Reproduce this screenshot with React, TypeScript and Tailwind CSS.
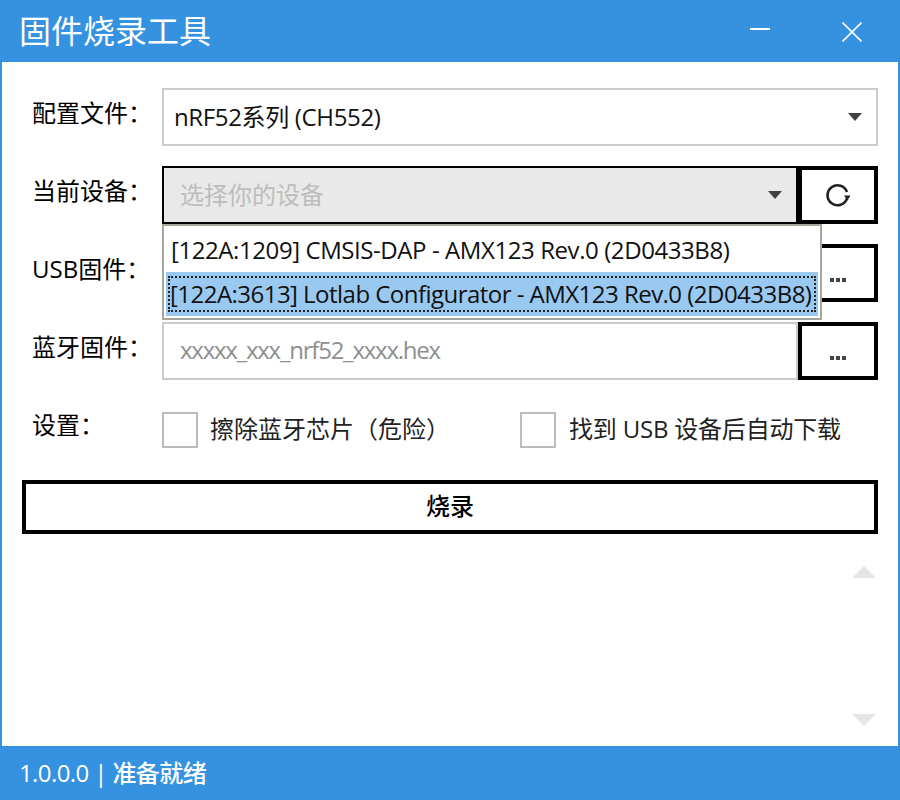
const FONT = "font-['Open_Sans','Noto_Sans_CJK_SC',sans-serif]";

function Caret() {
  return (
    <svg width="14" height="8" viewBox="0 0 14 8" className="shrink-0">
      <polygon points="0,0 14,0 7,8" fill="#404040" />
    </svg>
  );
}

function Label({ children, offset }: { children: React.ReactNode; offset: string }) {
  return <div className={`w-[140px] shrink-0 pl-[10px] text-[24px] leading-[32px] text-black ${offset}`}>{children}</div>;
}

function BlackButton({ children }: { children: React.ReactNode }) {
  return (
    <div className="flex h-[58px] w-[80px] shrink-0 items-center justify-center border-[4px] border-black bg-white text-[24px] font-semibold text-black">
      {children}
    </div>
  );
}

const Dots = () => (
  <svg width="16" height="4" viewBox="0 0 16 4" className="mt-[14px]">
    <rect x="0" y="0" width="4" height="4" fill="#444" />
    <rect x="6" y="0" width="4" height="4" fill="#444" />
    <rect x="12" y="0" width="4" height="4" fill="#444" />
  </svg>
);

export default function App() {
  return (
    <div className={`flex h-[800px] w-[900px] flex-col bg-[#3492e0] ${FONT}`}>
      <div className="flex h-[62px] shrink-0 items-center justify-between pl-[19px] pr-[38px] text-white">
        <div className="text-[32px] leading-[42px]">固件烧录工具</div>
        <div className="flex items-center gap-[72px]">
          <svg width="20" height="20" viewBox="0 0 20 20">
            <rect x="0" y="7" width="20" height="2" fill="#fff" />
          </svg>
          <svg width="20" height="20" viewBox="0 0 20 20" className="mt-[2px]">
            <path d="M0.5 0.5 L19.5 19.5 M19.5 0.5 L0.5 19.5" stroke="#fff" strokeWidth="1.6" fill="none" />
          </svg>
        </div>
      </div>

      <div className="mx-[2px] flex min-h-0 flex-1 flex-col bg-white px-[20px] pt-[26px]">
        <div className="flex items-center">
          <Label offset="pb-[8px]">配置文件：</Label>
          <div className="flex h-[58px] flex-1 items-center justify-between border-2 border-[#cccccc] bg-white pl-[10px] pr-[14px]">
            <span className="text-[24px] tracking-[-0.35px] text-[#111]">nRF52系列 (CH552)</span>
            <Caret />
          </div>
        </div>

        <div className="relative mt-[20px] flex items-center">
          <Label offset="pb-[8px]">当前设备：</Label>
          <div className="flex h-[58px] flex-1 items-center justify-between border-2 border-black bg-[#e9e9e9] pl-[16px] pr-[14px]">
            <span className="text-[24px] text-[#bdbdbd]">选择你的设备</span>
            <Caret />
          </div>
          <BlackButton>
            <svg width="24" height="24" viewBox="0 0 24 24">
              <path d="M21 9 A10 10 0 1 0 21 15.5" stroke="#222" strokeWidth="2.6" fill="none" />
              <polygon points="18,12.5 24.5,12.5 21.5,17.5" fill="#222" />
            </svg>
          </BlackButton>

          <div className="absolute left-[140px] top-[58px] z-10 w-[660px] border-2 border-[#a8a59c] bg-white p-[2px] text-[24px] leading-[44px] text-[#111]">
            <div className="h-[44px] whitespace-nowrap pl-[5px] tracking-[-0.42px]">[122A:1209] CMSIS-DAP - AMX123 Rev.0 (2D0433B8)</div>
            <div className="flex h-[44px] items-center bg-[#99c8f0] px-[2px]">
              <div className="flex h-[36px] w-full items-center whitespace-nowrap border-2 border-dotted border-[#222] tracking-[-0.53px]">
                [122A:3613] Lotlab Configurator - AMX123 Rev.0 (2D0433B8)
              </div>
            </div>
          </div>
        </div>

        <div className="mt-[20px] flex items-center">
          <Label offset="pb-[8px]">USB固件：</Label>
          <div className="h-[58px] flex-1 border-2 border-[#cccccc] bg-white" />
          <BlackButton>
            <Dots />
          </BlackButton>
        </div>

        <div className="mt-[20px] flex items-center">
          <Label offset="pb-[8px]">蓝牙固件：</Label>
          <div className="flex h-[58px] flex-1 items-center border-2 border-[#cccccc] bg-white pb-[2px] pl-[16px]">
            <span className="text-[24px] tracking-[-1.23px] text-[#8f8f8f]">xxxxx_xxx_nrf52_xxxx.hex</span>
          </div>
          <BlackButton>
            <Dots />
          </BlackButton>
        </div>

        <div className="mt-[32px] flex h-[36px] items-center">
          <Label offset="pb-[10px]">设置：</Label>
          <div className="h-[36px] w-[36px] shrink-0 border-2 border-[#bbbbbb]" />
          <span className="ml-[12px] w-[310px] pb-[2px] text-[24px] leading-[36px] text-[#222]">擦除蓝牙芯片（危险）</span>
          <div className="h-[36px] w-[36px] shrink-0 border-2 border-[#bbbbbb]" />
          <span className="ml-[13px] whitespace-nowrap pb-[2px] text-[24px] leading-[36px] tracking-[-0.2px] text-[#222]">找到 USB 设备后自动下载</span>
        </div>

        <div className="mt-[32px] flex h-[54px] items-center justify-center border-[4px] border-black pb-[2px] text-[24px] font-medium text-black">
          烧录
        </div>

        <div className="flex flex-1 flex-col items-end justify-between pb-[20px] pt-[32px] pr-[2px]">
          <svg width="24" height="12" viewBox="0 0 24 12">
            <polygon points="12,0 24,12 0,12" fill="#e6e6e6" />
          </svg>
          <svg width="24" height="12" viewBox="0 0 24 12">
            <polygon points="0,0 24,0 12,12" fill="#e6e6e6" />
          </svg>
        </div>
      </div>

      <div className="flex h-[54px] shrink-0 items-center pl-[19px] text-[24px] font-medium tracking-[-0.6px] text-white">
        1.0.0.0 | 准备就绪
      </div>
    </div>
  );
}
